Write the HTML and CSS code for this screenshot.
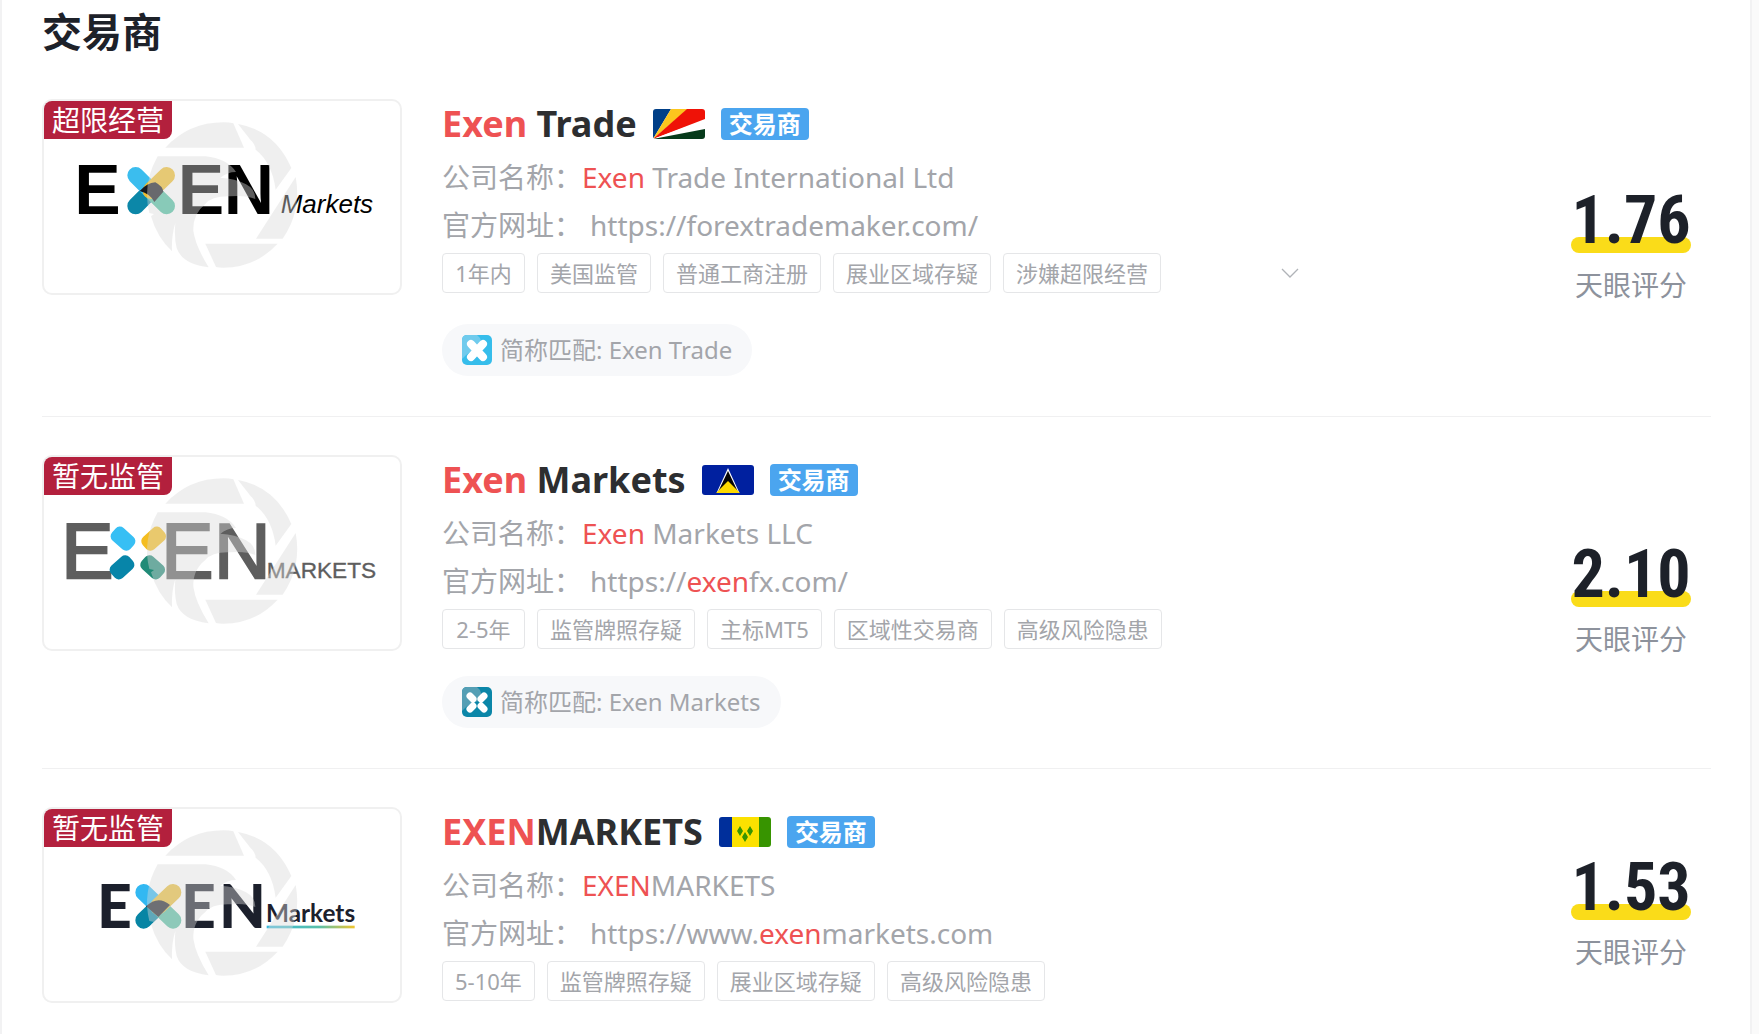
FILE: index.html
```html
<!DOCTYPE html>
<html lang="zh-CN">
<head>
<meta charset="utf-8">
<title>交易商</title>
<link rel="stylesheet" href="styles.css">
</head>
<body>
<svg class="defs" aria-hidden="true">
  <symbol id="watermark" viewBox="0 0 1080 588">
    <g fill="#d8d8d8" fill-opacity=".42">
      <path d="M370 146Q440 70 545 70Q562 70 574 73L606 146Z"/>
      <path d="M588 75Q700 95 748 207L701 272Q690 190 641 152Q640 135 625 122Z"/>
      <path d="M761 234Q780 335 722 419L642 419Z"/>
      <path d="M490 434L707 434Q640 506 545 506Q530 506 522 504Z"/>
      <path d="M347 172L490 172Q555 178 582 219Q556 219 535 236Q580 238 612 256Q640 270 640 300Q610 288 565 292Q510 290 490 315Q452 345 454 395Q460 440 500 505Q420 495 404 447Q396 415 400 372Q388 410 390 457Q345 415 327 352L336 345L322 342Q300 255 347 172Z"/>
    </g>
  </symbol>
</svg>
<main class="panel">
  <h1 class="heading">交易商</h1>

  <article class="dealer">
    <div class="logo">
      <svg class="logo-art" viewBox="6 6 1068 576" role="img" aria-label="Exen Markets">
        <g font-family="Liberation Sans, Arial, sans-serif" fill="#000">
          <g font-size="209" font-weight="700"><text x="97" y="344">E</text><text x="407" y="344">E</text><text x="545" y="344">N</text></g>
          <text x="716" y="342" font-size="78" font-style="italic">Markets</text>
        </g>
        <g stroke-width="50" stroke-linecap="round">
          <path d="M281 321L327 275" stroke="#0c87a8"/><path d="M374 321L327 275" stroke="#4fbfa0"/>
          <path d="M281 229L327 275" stroke="#3bbdee"/><path d="M374 229L327 275" stroke="#f0bd2b"/>
        </g>
        <path d="M293 276Q315 252 340 250Q362 262 364 278L337 309Q325 284 293 276Z" fill="#17191f"/>
        <use href="#watermark" width="1080" height="588"/>
      </svg>
      <span class="status">超限经营</span>
    </div>
    <div class="info">
      <h2 class="name"><span><em>Exen</em> Trade</span>
        <svg class="flag" viewBox="0 0 52 30" role="img" aria-label="塞舌尔"><path fill="#003f87" d="M0 0H18L0 30Z"/><path fill="#fcc61e" d="M18 0H35L0 30Z"/><path fill="#ef1207" d="M34 0H52V11L0 30Z"/><path fill="#fff" d="M52 10V21L0 30Z"/><path fill="#063a1b" d="M52 20V30H0Z"/></svg>
        <span class="badge">交易商</span></h2>
      <p class="line"><span>公司名称：</span><span><em>Exen</em> Trade International Ltd</span></p>
      <p class="line site"><span>官方网址：</span><a href="#">https://forextrademaker.com/</a></p>
      <div class="tags">
        <span class="tag">1年内</span><span class="tag">美国监管</span><span class="tag">普通工商注册</span><span class="tag">展业区域存疑</span><span class="tag">涉嫌超限经营</span>
        <button class="more" type="button" aria-label="展开"><svg width="18" height="10" viewBox="0 0 18 10"><path d="M1 1L9 9L17 1" fill="none" stroke="#b0b3b8" stroke-width="1.3"/></svg></button>
      </div>
      <div class="match"><svg class="mini" viewBox="0 0 30 30"><rect width="30" height="30" rx="5" fill="#36bdeb"/><path d="M0 15V5Q0 0 5 0H15Q22 5 17 14Q8 15 0 24Z" fill="#70cbed"/><path d="M9 9L21 22M21 9L9 22" stroke="#fff" stroke-width="8" stroke-linecap="round"/></svg><span>简称匹配: Exen Trade</span></div>
    </div>
    <div class="score"><strong class="value">1.76</strong><span class="caption">天眼评分</span></div>
  </article>

  <article class="dealer">
    <div class="logo">
      <svg class="logo-art" viewBox="6 6 1068 576" role="img" aria-label="Exen Markets">
        <g font-family="Liberation Sans, Arial, sans-serif" fill="#5e5e5e" stroke="#5e5e5e">
          <g font-size="235" stroke-width="7"><text x="58" y="369">E</text><text x="358" y="369">E</text><text x="516" y="369">N</text></g>
          <text x="674" y="368" font-size="68" stroke-width="1">MARKETS</text>
        </g>
        <rect x="206" y="226" width="74" height="50" rx="17" fill="#37bff4" transform="rotate(42 243 251)"/>
        <rect x="298" y="226" width="74" height="50" rx="17" fill="#f4bd20" transform="rotate(-42 335 251)"/>
        <rect x="203" y="312" width="74" height="50" rx="17" fill="#0785a9" transform="rotate(-42 240 337)"/>
        <rect x="295" y="312" width="74" height="50" rx="17" fill="#218b77" transform="rotate(42 332 337)"/>
        <use href="#watermark" width="1080" height="588"/>
      </svg>
      <span class="status">暂无监管</span>
    </div>
    <div class="info">
      <h2 class="name"><span><em>Exen</em> Markets</span>
        <svg class="flag" viewBox="0 0 52 30" role="img" aria-label="圣卢西亚"><path fill="#00209f" d="M0 0H52V30H0Z"/><path fill="#fff" d="M26 3L37 27H15Z"/><path fill="#050505" d="M26 6L36 27H16Z"/><path fill="#fcd900" d="M26 16L38 28H14Z"/></svg>
        <span class="badge">交易商</span></h2>
      <p class="line"><span>公司名称：</span><span><em>Exen</em> Markets LLC</span></p>
      <p class="line site"><span>官方网址：</span><a href="#">https://<em>exen</em>fx.com/</a></p>
      <div class="tags">
        <span class="tag">2-5年</span><span class="tag">监管牌照存疑</span><span class="tag">主标MT5</span><span class="tag">区域性交易商</span><span class="tag">高级风险隐患</span>
      </div>
      <div class="match"><svg class="mini" viewBox="0 0 30 30"><rect width="30" height="30" rx="5" fill="#0b86a8"/><path d="M0 15V5Q0 0 5 0H15Q22 5 17 14Q8 15 0 24Z" fill="#559fb5"/><path d="M8 9L11 12M22 9L19 12M8 22L11 19M22 22L19 19" stroke="#fff" stroke-width="7" stroke-linecap="round"/></svg><span>简称匹配: Exen Markets</span></div>
    </div>
    <div class="score"><strong class="value">2.10</strong><span class="caption">天眼评分</span></div>
  </article>

  <article class="dealer">
    <div class="logo">
      <svg class="logo-art" viewBox="6 6 1068 576" role="img" aria-label="Exen Markets">
        <defs><linearGradient id="rule"><stop offset="0" stop-color="#38b8dc"/><stop offset=".6" stop-color="#5bc0a8"/><stop offset="1" stop-color="#f0c52e"/></linearGradient></defs>
        <g font-family="Lato, sans-serif" fill="#1c202c">
          <g font-size="182" font-weight="900"><text x="165" y="364">E</text><text x="417" y="364">E</text><text x="531" y="364">N</text></g>
          <text x="672" y="345" font-size="73" font-weight="700">Markets</text>
        </g>
        <g stroke-width="50" stroke-linecap="round">
          <path d="M305 340L349 298" stroke="#0785a4"/><path d="M393 340L349 298" stroke="#57bea2"/>
          <path d="M305 256L349 298" stroke="#32b8f2"/><path d="M393 256L349 298" stroke="#e8be3b"/>
        </g>
        <path d="M312 298Q348 264 384 294L349 330Z" fill="#22242c"/>
        <rect x="674" y="356" width="264" height="8" fill="url(#rule)"/>
        <use href="#watermark" width="1080" height="588"/>
      </svg>
      <span class="status">暂无监管</span>
    </div>
    <div class="info">
      <h2 class="name"><span><em>EXEN</em>MARKETS</span>
        <svg class="flag" viewBox="0 0 52 30" role="img" aria-label="圣文森特和格林纳丁斯"><path fill="#002f9b" d="M0 0H13V30H0Z"/><path fill="#fce100" d="M13 0H40V30H13Z"/><path fill="#379400" d="M40 0H52V30H40ZM21 9L24 14L21 19L18 14ZM31 9L34 14L31 19L28 14ZM26 15L29 20L26 25L23 20Z"/></svg>
        <span class="badge">交易商</span></h2>
      <p class="line"><span>公司名称：</span><span><em>EXEN</em>MARKETS</span></p>
      <p class="line site"><span>官方网址：</span><a href="#">https://www.<em>exen</em>markets.com</a></p>
      <div class="tags">
        <span class="tag">5-10年</span><span class="tag">监管牌照存疑</span><span class="tag">展业区域存疑</span><span class="tag">高级风险隐患</span>
      </div>
    </div>
    <div class="score"><strong class="value">1.53</strong><span class="caption">天眼评分</span></div>
  </article>
</main>
</body>
</html>
```
FILE: styles.css
```css
* { box-sizing: border-box; }

body {
  margin: 0;
  background: #fafafa;
  color: #2d2e30;
  font-family: "Noto Sans", "Noto Sans CJK SC", sans-serif;
}

h1, h2, p { margin: 0; }
em { color: #ee5253; font-style: normal; }
a { color: inherit; text-decoration: none; }
.defs { display: block; width: 0; height: 0; }

.panel {
  min-height: 100vh;
  margin-right: 7px;
  padding: 0 39px 30px 40px;
  background: #fff;
  border: solid #f2f2f3;
  border-width: 0 2px;
}

.heading {
  padding: 4px 0 1px;
  color: #1d2129;
  font-size: 40px;
  line-height: 56px;
}

.dealer {
  display: flex;
  gap: 40px;
  padding: 38px 0 40px;
}
.dealer + .dealer { border-top: 1px solid #f0f0f1; }

.logo {
  position: relative;
  flex: none;
  align-self: flex-start;
  width: 360px;
  height: 196px;
  overflow: hidden;
  border: 2px solid #f0f0f0;
  border-radius: 10px;
}
.logo-art { display: block; width: 100%; height: 100%; }
.status {
  position: absolute;
  top: 0;
  left: 0;
  padding: 0 8px;
  border-bottom-right-radius: 8px;
  background: #b3203d;
  color: #fff;
  font-size: 28px;
  line-height: 38px;
}

.info { flex: 1; min-width: 0; }

.name {
  display: flex;
  align-items: center;
  gap: 16px;
  height: 50px;
  margin-bottom: 4px;
  font-size: 36px;
  line-height: 50px;
}
.flag { width: 52px; height: 30px; border-radius: 3px; }
.badge {
  padding: 0 8px;
  border-radius: 4px;
  background: #4ba5ef;
  color: #fff;
  font-size: 24px;
  line-height: 32px;
}

.line {
  display: flex;
  color: #a3a5aa;
  font-size: 28px;
  line-height: 48px;
}
.site { gap: 8px; }

.tags {
  display: flex;
  align-items: flex-start;
  gap: 12px;
  max-width: 860px;
  margin-top: 4px;
}
.tag {
  min-width: 83px;
  padding: 0 12px;
  border: 1px solid #e5e6e8;
  border-radius: 4px;
  color: #a3a5aa;
  font-size: 22px;
  line-height: 38px;
  text-align: center;
  white-space: nowrap;
}
.more {
  display: grid;
  place-items: center;
  width: 24px;
  height: 44px;
  margin-left: auto;
  padding: 0 0 4px;
  border: 0;
  background: none;
}

.match {
  display: flex;
  align-items: center;
  gap: 8px;
  width: fit-content;
  margin-top: 27px;
  padding: 0 20px;
  border-radius: 26px;
  background: #f7f8fa;
  color: #a3a5aa;
  font-size: 24px;
  line-height: 52px;
}
.mini { width: 30px; height: 30px; }

.score {
  display: flex;
  flex-direction: column;
  align-items: center;
  align-self: center;
  width: 120px;
  margin-right: 20px;
  padding-top: 16px;
}
.value {
  position: relative;
  z-index: 0;
  width: 100%;
  color: #1d2129;
  font-family: "Roboto Condensed", Roboto, sans-serif;
  font-size: 66px;
  line-height: 64px;
  text-align: center;
}
.value::before {
  content: "";
  position: absolute;
  z-index: -1;
  inset: auto 0 0;
  height: 16px;
  border-radius: 8px;
  background: #fadc19;
}
.caption {
  margin-top: 14px;
  color: #8d929c;
  font-size: 28px;
  line-height: 36px;
}
```
